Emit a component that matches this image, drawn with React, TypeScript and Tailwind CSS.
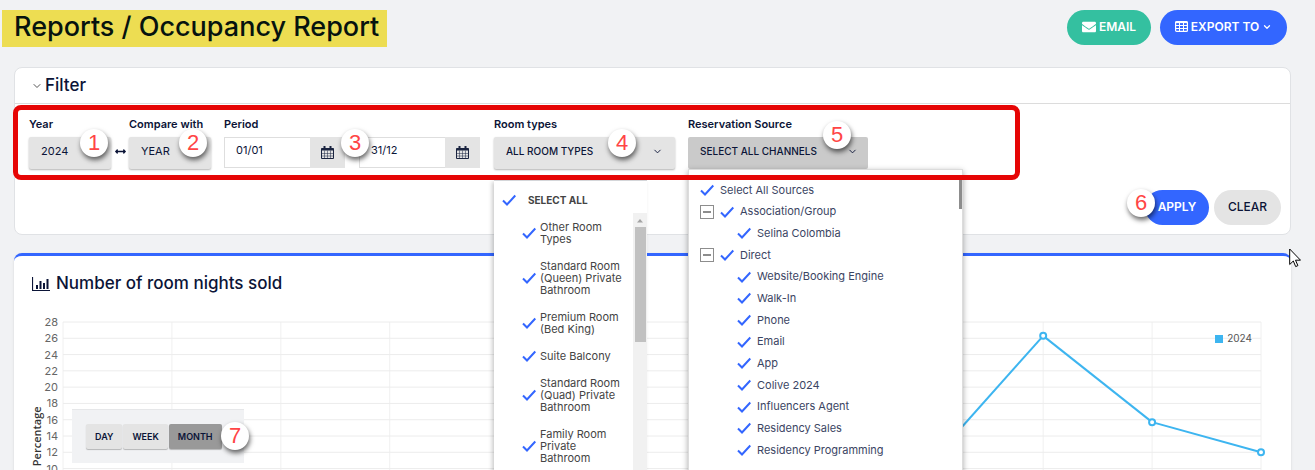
import { useState } from "react";
import type { ReactNode } from "react";
import { ChevronDown } from "lucide-react";
import { FaArrowsAltH, FaEnvelope } from "react-icons/fa";

const ROOM_TYPES = [
  "Other Room Types",
  "Standard Room (Queen) Private Bathroom",
  "Premium Room (Bed King)",
  "Suite Balcony",
  "Standard Room (Quad) Private Bathroom",
  "Family Room Private Bathroom",
];

type Source = { label: string; level: "root" | "group" | "item" };

const SOURCES: Source[] = [
  { label: "Select All Sources", level: "root" },
  { label: "Association/Group", level: "group" },
  { label: "Selina Colombia", level: "item" },
  { label: "Direct", level: "group" },
  { label: "Website/Booking Engine", level: "item" },
  { label: "Walk-In", level: "item" },
  { label: "Phone", level: "item" },
  { label: "Email", level: "item" },
  { label: "App", level: "item" },
  { label: "Colive 2024", level: "item" },
  { label: "Influencers Agent", level: "item" },
  { label: "Residency Sales", level: "item" },
  { label: "Residency Programming", level: "item" },
];

// one value per month, January to December
const NIGHTS = [0, 0, 0, 0, 0, 0, 0, 2, 11.3, 26.3, 15.7, 12];
const MAX = 28;
const TICKS = Array.from({ length: 15 }, (_, i) => MAX - i * 2);
const PLOT_HEIGHT = 228;

const xAt = (month: number) => `${(month * 100) / (NIGHTS.length - 1)}%`;
const yAt = (value: number) => PLOT_HEIGHT * (1 - value / MAX);

// numbered callout that sits on top of a control
function Step({ n, className }: { n: number; className: string }) {
  return (
    <span
      className={`absolute z-40 flex size-7 items-center justify-center rounded-full bg-white font-['Liberation_Sans'] text-[22px] leading-7 font-normal text-[#ff4545] shadow-[1px_3px_5px_rgba(0,0,0,0.6)] ${className}`}
    >
      {n}
    </span>
  );
}

function CheckMark({ className = "" }: { className?: string }) {
  return (
    <svg
      viewBox="0 0 14 12"
      aria-hidden="true"
      className={`invisible shrink-0 fill-none stroke-[#3366ff] stroke-2 peer-checked:visible ${className}`}
    >
      <path d="M1 6.5 5 10.5 13.3 1.5" />
    </svg>
  );
}

function CalendarIcon() {
  return (
    <svg viewBox="0 0 13 13" aria-hidden="true" className="size-[13px] fill-none stroke-[#1b2440]">
      <path d="M.5 2.5h12v10H.5z" />
      <path d="M.5 3.5h12" strokeWidth="2" />
      <path d="M3.5 0v3M9.5 0v3" strokeWidth="2" />
      <path d="M3.5 4.5v8M6.5 4.5v8M9.5 4.5v8M.5 7.5h12M.5 10h12" strokeWidth=".5" />
    </svg>
  );
}

function TableIcon() {
  return (
    <svg viewBox="0 0 13 11" aria-hidden="true" className="h-[11px] w-[13px] fill-none stroke-white">
      <rect x=".6" y=".6" width="11.8" height="9.8" rx="1" strokeWidth="1.2" />
      <path d="M.5 1.3h12" strokeWidth="1.6" />
      <path d="M4.5 1v9.5M8.5 1v9.5M.5 4.5h12M.5 7.5h12" />
    </svg>
  );
}

function BarChartIcon() {
  return (
    <svg viewBox="0 0 18 14" aria-hidden="true" className="h-[14px] w-[18px] fill-none stroke-[#0b1437]">
      <path d="M.5 0v13.5H18" strokeWidth="1.2" />
      <path d="M5 12V8M8.500 12V4M12 12V6M15.500 12V2" strokeWidth="2" />
    </svg>
  );
}

function Field({ label, htmlFor, children }: { label: string; htmlFor: string; children: ReactNode }) {
  return (
    <div className="flex flex-col gap-1.5">
      <label htmlFor={htmlFor} className="text-[11px] leading-[14px] font-semibold whitespace-nowrap">
        {label}
      </label>
      {children}
    </div>
  );
}

const selectClass =
  "h-8 w-[82px] appearance-none rounded-xs bg-[#e4e4e4] px-3 pb-1 text-[11px] shadow-[0_1px_2px_rgba(0,0,0,0.3)]";

function DateBox({ id, label, value }: { id: string; label: string; value: string }) {
  return (
    <div className="flex h-[31px] w-[121px]">
      <input
        id={id}
        aria-label={label}
        defaultValue={value}
        className="w-[86px] border border-r-0 border-[#dedede] bg-white px-[11px] pb-1 text-[11px]"
      />
      <button type="button" aria-label={`Pick ${label}`} className="flex flex-1 items-center justify-center bg-[#e4e4e4]">
        <CalendarIcon />
      </button>
    </div>
  );
}

function RoomTypesMenu() {
  return (
    <div className="absolute top-[63px] left-0 z-10 h-[300px] w-[153px] overflow-hidden border-t border-[#d4d6d9] bg-white text-[11px] text-[#444] shadow-[-2px_2px_4px_rgba(0,0,0,0.2)]">
      <label className="flex h-8 items-center gap-3 pt-1.5 pl-2 text-[10px] font-bold">
        <input type="checkbox" defaultChecked className="peer sr-only" />
        <CheckMark className="h-3 w-3.5" />
        SELECT ALL
      </label>
      <div className="flex">
        <ul className="flex flex-1 flex-col gap-[15px] pt-2 pl-7">
          {ROOM_TYPES.map((room) => (
            <li key={room}>
              <label className="flex items-center gap-1 leading-3">
                <input type="checkbox" defaultChecked className="peer sr-only" />
                <CheckMark className="h-3 w-3.5" />
                <span className="w-[86px]">{room}</span>
              </label>
            </li>
          ))}
        </ul>
        <div aria-hidden="true" className="flex h-[300px] w-3.5 shrink-0 flex-col items-center bg-[#f1f1f1]">
          <svg viewBox="0 0 14 14" className="size-3.5 fill-[#a3a3a3]">
            <path d="M4 9.500h6L7 6z" />
          </svg>
          <div className="h-[115px] w-[11px] bg-[#c1c1c1]" />
        </div>
      </div>
    </div>
  );
}

function SourcesMenu() {
  return (
    <div className="absolute top-[52px] left-0 z-10 flex w-[275px] justify-between border border-[#dcdcdc] bg-white pt-2.5 pl-[11px] text-[11px] text-[#3b4563] shadow-[0_2px_6px_rgba(0,0,0,0.35)]">
      <div className="h-[320px]">
        <ul className="flex h-[280px] flex-col justify-between">
          {SOURCES.map(({ label, level }) => (
            <li key={label} className={`flex h-5 items-center gap-1.5 ${level === "item" ? "pl-[37px]" : ""}`}>
              {level === "group" && (
                <button
                  type="button"
                  aria-label={`Collapse ${label}`}
                  className="flex size-3.5 items-center justify-center border border-[#8d8d8d]"
                >
                  <span className="h-0.5 w-2 bg-[#8d8d8d]" />
                </button>
              )}
              <label className="flex items-center gap-1.5 whitespace-nowrap">
                <input type="checkbox" defaultChecked className="peer sr-only" />
                <CheckMark className="h-3 w-3.5" />
                {label}
              </label>
            </li>
          ))}
        </ul>
      </div>
      <div aria-hidden="true" className="h-[29px] w-[3px] bg-[#8d8d8d]" />
    </div>
  );
}

function FilterCard() {
  return (
    <section className="rounded-lg border border-[#e0e2e5] bg-white">
      <h2 className="flex h-9 items-center gap-0.5 border-b border-[#dcdcdc] pl-4 text-[17px] font-medium">
        <ChevronDown size={12} strokeWidth={2} className="text-[#555]" />
        Filter
      </h2>
      <div className="relative pt-[13px] pb-[21px] pl-3.5">
        {/* outline that groups the filter fields */}
        <div className="pointer-events-none absolute top-px -left-0.5 z-30 h-[75px] w-[1007px] rounded-lg border-[5px] border-[#e60505]" />
        <div className="flex">
          <div className="relative">
            <Field label="Year" htmlFor="year">
              <select id="year" className={selectClass}>
                <option>2024</option>
              </select>
            </Field>
            <Step n={1} className="top-3 left-[51px]" />
          </div>
          <div className="flex w-[18px] items-center justify-center pt-4">
            <FaArrowsAltH size={11} />
          </div>
          <div className="relative">
            <Field label="Compare with" htmlFor="compare">
              <select id="compare" className={selectClass}>
                <option>YEAR</option>
              </select>
            </Field>
            <Step n={2} className="top-3 left-[50px]" />
          </div>
          <div className="relative ml-[13px]">
            <Field label="Period" htmlFor="from">
              <div className="flex gap-3.5">
                <DateBox id="from" label="start date" value="01/01" />
                <DateBox id="to" label="end date" value="31/12" />
              </div>
            </Field>
            <Step n={3} className="top-3 left-[117px]" />
          </div>
          <div className="relative ml-3.5">
            <Field label="Room types" htmlFor="rooms">
              <button
                id="rooms"
                type="button"
                aria-haspopup="true"
                aria-expanded="true"
                className="flex h-8 w-[181px] items-center justify-between rounded-xs bg-[#e4e4e4] px-3 pb-1 text-[10px] font-medium shadow-[0_1px_2px_rgba(0,0,0,0.3)]"
              >
                ALL ROOM TYPES
                <ChevronDown size={11} />
              </button>
            </Field>
            <Step n={4} className="top-3 left-[114px]" />
            <RoomTypesMenu />
          </div>
          <div className="relative ml-[13px]">
            <Field label="Reservation Source" htmlFor="sources">
              <button
                id="sources"
                type="button"
                aria-haspopup="true"
                aria-expanded="true"
                className="flex h-8 w-[180px] items-center justify-between rounded-xs bg-[#cacaca] pr-2.5 pb-1 pl-3 text-[10px] font-medium"
              >
                SELECT ALL CHANNELS
                <ChevronDown size={11} />
              </button>
            </Field>
            <Step n={5} className="top-1 left-[135px]" />
            <SourcesMenu />
          </div>
        </div>
      </div>
      <div className="flex justify-end gap-[5px] pr-[9px] pb-[9px] text-xs">
        <div className="relative">
          <button type="button" className="h-[35px] w-16 rounded-full bg-[#3366ff] pb-0.5 font-semibold text-white">
            APPLY
          </button>
          <Step n={6} className="-top-px -left-[18px]" />
        </div>
        <button type="button" className="h-[35px] w-[67px] rounded-full bg-[#e4e4e4] pb-0.5 font-medium">
          CLEAR
        </button>
      </div>
    </section>
  );
}

function Plot() {
  return (
    <svg
      role="img"
      aria-label="Room nights per month"
      className="my-2 min-w-0 flex-1 overflow-visible"
      height={PLOT_HEIGHT}
    >
      {NIGHTS.map((_, month) => (
        <line key={month} x1={xAt(month)} x2={xAt(month)} y1={0} y2={PLOT_HEIGHT} className="stroke-[#f0f0f0]" />
      ))}
      {TICKS.map((tick) => (
        <line key={tick} x1="0" x2="100%" y1={yAt(tick)} y2={yAt(tick)} className="stroke-[#ececec]" />
      ))}
      {NIGHTS.slice(1).map((value, i) => (
        <line
          key={i}
          x1={xAt(i)}
          y1={yAt(NIGHTS[i])}
          x2={xAt(i + 1)}
          y2={yAt(value)}
          className="stroke-[#3db5f0] stroke-2"
        />
      ))}
      {NIGHTS.map((value, month) => (
        <circle
          key={month}
          cx={xAt(month)}
          cy={yAt(value)}
          r={3}
          className="fill-white stroke-[#3db5f0] stroke-2"
        />
      ))}
    </svg>
  );
}

function ChartCard() {
  const [unit, setUnit] = useState("MONTH");

  return (
    <section className="relative rounded-lg border-t-[3px] border-[#3366ff] bg-white pt-4 pr-[30px] pb-6 pl-[18px] shadow-sm">
      <h2 className="flex h-6 items-center gap-1.5 text-[17px] font-medium">
        <BarChartIcon />
        Number of room nights sold
      </h2>
      <div className="mt-[18px] flex text-[11px] text-[#666]">
        <div className="flex w-2.5 items-center justify-center">
          <span className="-rotate-90 font-['Open_Sans'] font-semibold text-[#333]">Percentage</span>
        </div>
        <ol className="flex h-[244px] w-4 flex-col justify-between text-right leading-4">
          {TICKS.map((tick) => (
            <li key={tick}>{tick}</li>
          ))}
        </ol>
        <div className="w-[5px]" />
        <Plot />
      </div>
      <div className="absolute top-[75px] right-[39px] flex items-center gap-1 text-[10px] text-[#555]">
        <span className="size-2 bg-[#3db5f0]" />
        2024
      </div>
      <div className="absolute top-[153px] left-[58px] flex h-[54px] w-[172px] items-center gap-px border-t border-[#e6e7e9] bg-[#f1f2f4] pl-3.5 text-[9px] font-semibold">
        {["DAY", "WEEK", "MONTH"].map((name) => (
          <button
            key={name}
            type="button"
            aria-pressed={unit === name}
            onClick={() => setUnit(name)}
            className="h-[25px] rounded-xs bg-[#e4e4e4] px-[9px] shadow-[0_1px_1px_rgba(0,0,0,0.25)] aria-pressed:bg-[#999]"
          >
            {name}
          </button>
        ))}
        <Step n={7} className="top-3 left-[149px]" />
      </div>
      {/* mouse pointer */}
      <svg viewBox="0 0 12 20" aria-hidden="true" className="absolute -top-2 -right-2.5 h-5 w-3 fill-white stroke-black">
        <path d="M.7 1v15.500l3.600-3.500 2.400 5.600 2.200-1-2.400-5.400h5z" />
      </svg>
    </section>
  );
}

export default function App() {
  return (
    <div className="h-screen overflow-hidden bg-[#f1f2f4] pr-6 pl-3.5 font-['Inter',sans-serif] text-[#0b1437]">
      <header className="flex items-start justify-between pt-2.5 pb-5">
        <h1 className="-ml-3 bg-[#eddd52] pr-2 pb-1 pl-3 text-[27px] leading-[33px] font-medium text-[#06130f]">
          Reports / Occupancy Report
        </h1>
        <div className="flex gap-[9px] pr-1 text-xs font-semibold text-white">
          <button
            type="button"
            className="flex h-[35px] w-[84px] items-center justify-center gap-[3px] rounded-full bg-[#34c0a0] pb-0.5"
          >
            <FaEnvelope size={14} />
            EMAIL
          </button>
          <button
            type="button"
            className="flex h-[35px] w-[127px] items-center justify-center gap-[3px] rounded-full bg-[#3366ff] pb-0.5"
          >
            <TableIcon />
            EXPORT TO
            <ChevronDown size={10} strokeWidth={3} />
          </button>
        </div>
      </header>
      <main className="flex flex-col gap-[18px]">
        <FilterCard />
        <ChartCard />
      </main>
    </div>
  );
}
